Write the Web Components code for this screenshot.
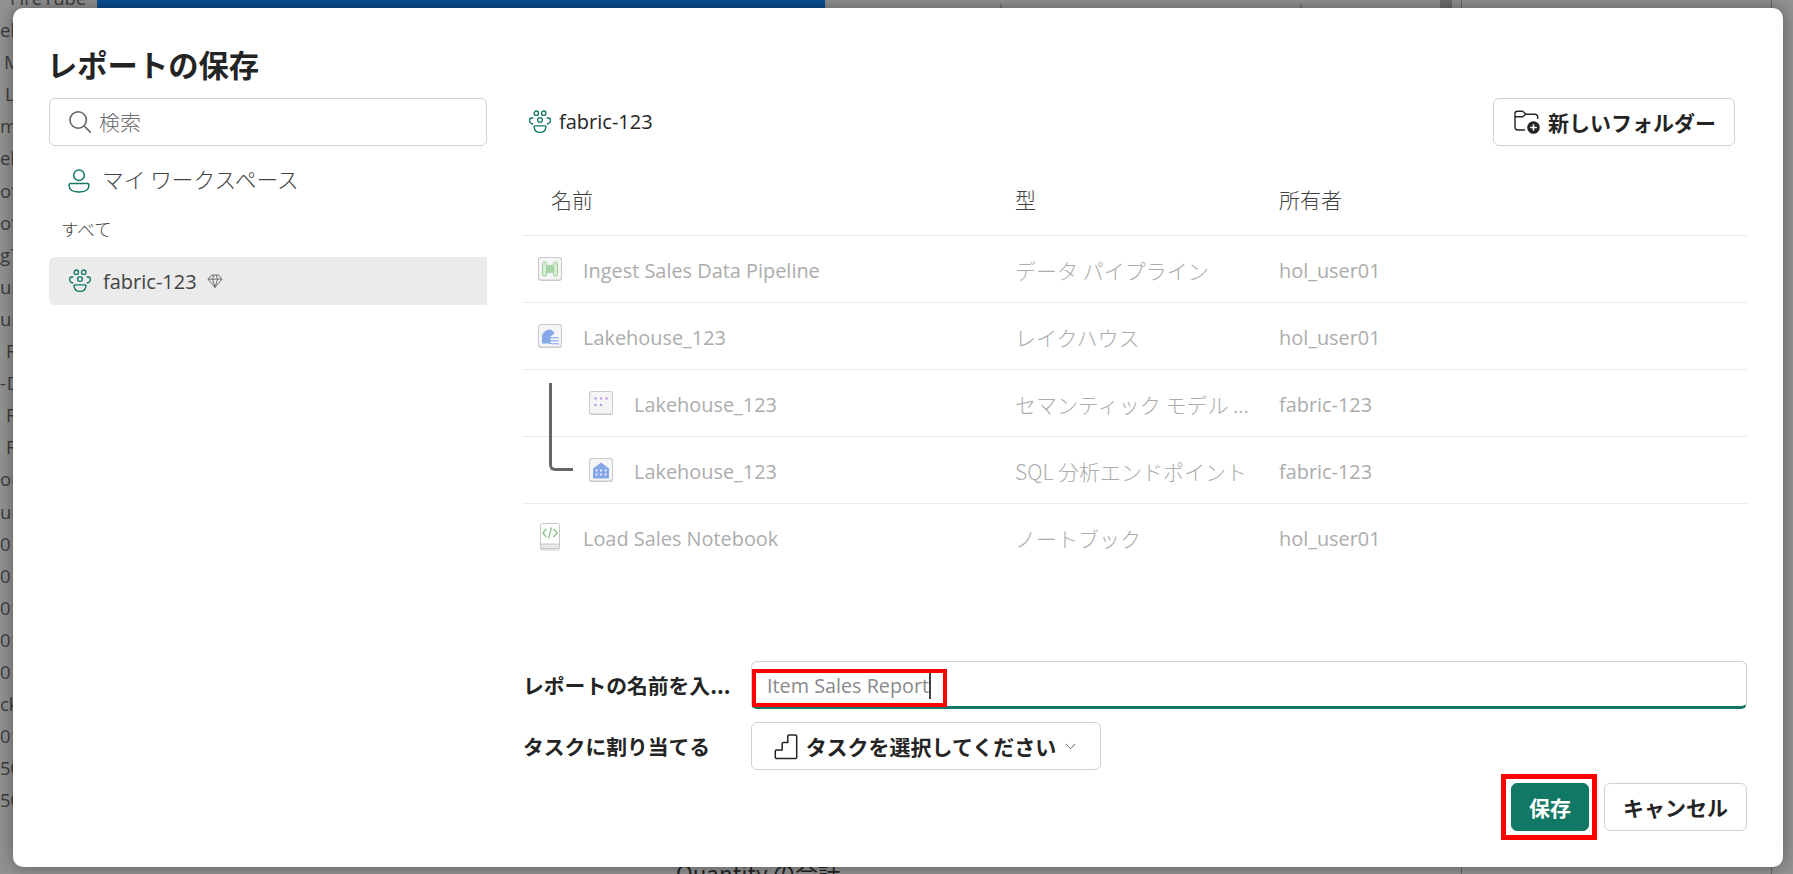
<!DOCTYPE html>
<html lang="ja"><head><meta charset="utf-8">
<style>
html,body{margin:0;padding:0;height:100%;overflow:hidden}
body{font-family:"Open Sans","Noto Sans CJK JP",sans-serif;background:#929292}
</style></head>
<body>
<backdrop-page></backdrop-page>
<save-dialog></save-dialog>
<script>
const FONT='"Open Sans","Noto Sans CJK JP",sans-serif';
const JP='"Noto Sans CJK JP","Open Sans",sans-serif';
const ICONS={
 team:(s=24)=>`<svg width="${s}" height="${s}" viewBox="0 0 24 24" fill="none" stroke="#117865" stroke-width="1.300"><circle cx="8.300" cy="3.200" r="2.200"/><circle cx="15.700" cy="3.200" r="2.200"/><circle cx="12" cy="10" r="2.400"/><path d="M5.400 8H3.800C2.500 8 1.600 8.900 1.600 10.200c0 2 1.300 3.500 3.600 3.800M18.600 8h1.600c1.300 0 2.200.9 2.200 2.200 0 2-1.300 3.500-3.600 3.800"/><path d="M6.800 15.800h10.400c.6 0 .9.400.8 1-.4 3.300-2.800 5.600-6 5.600s-5.600-2.300-6-5.600c-.1-.6.2-1 .8-1z"/></svg>`,
 person:`<svg width="24" height="24" viewBox="0 0 24 24" fill="none" stroke="#117865" stroke-width="1.500"><circle cx="12" cy="6.300" r="5.300"/><path d="M3.400 14.400h17.200c.8 0 1.300.5 1.300 1.300v1.300c0 3.600-4 6-9.900 6s-9.900-2.400-9.900-6v-1.300c0-.8.5-1.300 1.300-1.300z"/></svg>`,
 gem:`<svg width="16" height="16" viewBox="0 0 16 16" fill="none" stroke="#6f6f6f" stroke-width="1"><path d="M4.500 2h7L15 6.200 8 14.500 1 6.200z"/><path d="M1 6.200h14M5.500 6.200 8 14.500l2.500-8.300M5.500 6.200 6.800 2M10.500 6.200 9.200 2"/></svg>`,
 search:`<svg width="24" height="24" viewBox="0 0 24 24" fill="none" stroke="#616161" stroke-width="1.600"><circle cx="10.200" cy="10" r="8.200"/><path d="M16.200 16 22.800 22.600"/></svg>`,
 folder:`<svg width="26" height="24" viewBox="0 0 26 24" fill="none"><path d="M1 17V3.600C1 2.200 2 1.200 3.400 1.200h4.400c.6 0 1.100.2 1.500.6L11.800 4.300H20.800C22.500 4.300 23.700 5.500 23.700 7.200V9M1 6.800H8.600L11.800 4.300M1 17C1 18.800 2.200 20 3.900 20H11" stroke="#242424" stroke-width="1.400"/><circle cx="19.500" cy="17.500" r="6.300" fill="#242424"/><path d="M19.500 14.200v6.600M16.200 17.500h6.600" stroke="#fff" stroke-width="1.500"/></svg>`,
 stairs:`<svg width="24" height="27" viewBox="0 0 24 27" fill="none" stroke="#242424" stroke-width="1.500" stroke-linejoin="round"><path d="M15 2h6.500c.8 0 1.200.4 1.200 1.200v21c0 .8-.4 1.200-1.200 1.200H2.500c-.8 0-1.200-.4-1.200-1.200v-6c0-.8.4-1.200 1.200-1.200h5.700v-6.300c0-.8.4-1.200 1.200-1.200h4.400V3.200c0-.8.400-1.200 1.200-1.200z"/></svg>`,
 chevron:`<svg width="11" height="7" viewBox="0 0 11 7" fill="none" stroke="#616161" stroke-width="1"><path d="M.8 1 5.500 5.700 10.200 1"/></svg>`
};
const TILE={
 pipe:`<rect x="4.500" y="5" width="4" height="14" rx="1.500" fill="#d9eed7" stroke="#9fce9c"/><rect x="15.500" y="5" width="4" height="14" rx="1.500" fill="#d9eed7" stroke="#9fce9c"/><rect x="8.500" y="8" width="7" height="8" fill="#a9d4a6"/>`,
 lake:`<path d="M4 19.500V12C4 9.500 8 5.500 11.500 5.500c2 0 4 1.800 5 3.800L12.500 12.500v7z" fill="#86a8e8"/><path d="M11.500 13.800c1.700-1.600 3 1 4.700 0s3 1 4.700 0M11.500 16.800c1.700-1.600 3 1 4.700 0s3 1 4.700 0M11.500 19.800c1.700-1.600 3 1 4.700 0s3 1 4.700 0" fill="none" stroke="#86a8e8" stroke-width="1.100"/>`,
 model:`<g fill="#b79ade"><circle cx="6.500" cy="7.500" r="1.200"/><circle cx="12" cy="7.500" r="1.200"/><circle cx="17.500" cy="7.500" r="1.200"/></g><g fill="#a59ee0"><circle cx="6.500" cy="14" r="1.200"/><circle cx="12" cy="14" r="1.200"/></g>`,
 sql:`<path d="M4 10.500 12 4.500l8 6V19.500c0 .6-.4 1-1 1H5c-.6 0-1-.4-1-1z" fill="#86a8e8"/><g fill="#fff"><circle cx="7.500" cy="12.500" r="1"/><circle cx="12" cy="12.500" r="1"/><circle cx="16.500" cy="12.500" r="1"/><circle cx="7.500" cy="16.500" r="1"/><circle cx="12" cy="16.500" r="1"/><circle cx="16.500" cy="16.500" r="1"/></g>`,
 note:`<path d="M8.500 6 4.800 10l3.700 4M15.500 6l3.700 4-3.700 4M13.500 4.500l-3 11" fill="none" stroke="#86c286" stroke-width="1.300"/>`
};

class BackdropPage extends HTMLElement{
 constructor(){super();const r=this.attachShadow({mode:'open'});
 const rows=[[10,'Fire Tube'],[0,'elm'],[4,'M'],[5,'L'],[0,'m'],[0,'elm'],[0,'ot'],[0,'ot'],[0,'g T'],[0,'ur'],[0,'ur'],[6,'R'],[0,'- D'],[6,'R'],[6,'R'],[0,'ou'],[0,'ur'],[0,'0 H'],[0,'0 H'],[0,'0 S'],[0,'0 S'],[0,'0 H'],[0,'ck'],[0,'0 S'],[0,'50'],[0,'50']];
 r.innerHTML=`<style>
 :host{display:grid;grid-template-columns:97px 728px 1fr;grid-template-rows:8px 1fr;position:fixed;inset:0;background:#929292;overflow:hidden;font:18.500px ${FONT};color:#3a3a3a}
 .list{grid-row:1/3;grid-column:1;display:flex;flex-direction:column;margin-top:-18px;white-space:nowrap;color:#3c3c3c;word-spacing:-4px}
 .list div{height:32.100px;line-height:32.100px;flex:none}
 .blue{grid-row:1;grid-column:2;background:#0a4f90}
 .foot{position:absolute;left:676px;top:857px;font:22.500px/30px ${JP};color:#222;white-space:nowrap}
 .rule{position:absolute;top:0;bottom:0;width:1px;background:#666}
 .tick{position:absolute;top:4px;height:4px;width:2px;background:#777}
 .block{position:absolute;left:1440px;top:0;width:12px;height:8px;background:#6e6e6e}
 </style>
 <div class="list">${rows.map(([p,t])=>`<div style="padding-left:${p}px">${t}</div>`).join('')}</div>
 <div class="blue"></div>
 <div class="tick" style="left:1000px"></div><div class="tick" style="left:1300px"></div>
 <div class="block"></div>
 <div class="rule" style="left:1461px"></div><div class="rule" style="left:1771px"></div>
 <div class="foot">Quantity の合計</div>`;
 }
}
customElements.define('backdrop-page',BackdropPage);

class FileTile extends HTMLElement{
 constructor(){super();this.attachShadow({mode:'open'})}
 connectedCallback(){const k=this.getAttribute('kind');
 const note=k==='note';
 this.shadowRoot.innerHTML=`<style>
 :host{display:block;width:24px;height:${note?'28px':'24px'};flex:none}
 svg{display:block}
 </style>${note?
 `<svg width="24" height="28" viewBox="0 0 24 28"><rect x="2.500" y=".500" width="19" height="26.500" rx="2" fill="#fff" stroke="#c8c8c8"/><path d="M2.500 21h19v4.500H2.500z" fill="#e8e8e8" stroke="#c8c8c8"/>${TILE.note}</svg>`:
 `<svg width="24" height="24" viewBox="0 0 24 24"><rect width="24" height="24" rx="3" fill="#c9c9c9"/><rect x="1" y="1" width="22" height="21.500" rx="2.200" fill="#f5f5f6"/>${TILE[k]}</svg>`}`;
 }
}
customElements.define('file-tile',FileTile);

class FileRow extends HTMLElement{
 constructor(){super();this.attachShadow({mode:'open'})}
 connectedCallback(){const g=a=>this.getAttribute(a)||'';const child=this.hasAttribute('child');
 this.shadowRoot.innerHTML=`<style>
 :host{display:grid;grid-template-columns:492px 264px 1fr;height:66px;border-bottom:1px solid #ebebeb;align-items:center;font:19.900px/26px ${FONT};color:#acacac;position:relative}
 :host(:last-of-type){border-bottom:0}
 .name{display:flex;align-items:center;gap:21px;padding-left:${child?'66px':'15px'}}
 .type{font:300 21px/26px ${JP};white-space:nowrap;padding-top:1px}
 .t{padding-top:3px}
 </style>
 <div class="name"><file-tile kind="${g('kind')}"></file-tile><span class="t">${g('name')}</span></div>
 <div class="type">${g('type')}</div><div class="t">${g('owner')}</div>`;
 }
}
customElements.define('file-row',FileRow);

class OutlineBtn extends HTMLElement{
 constructor(){super();const r=this.attachShadow({mode:'open'});
 r.innerHTML=`<style>
 :host{display:inline-flex;align-items:center;justify-content:center;height:48px;box-sizing:border-box;border:1px solid #d1d1d1;border-radius:6px;background:#fff;font:600 21px/26px ${JP};color:#242424;white-space:nowrap}
 :host([primary]){background:#117865;border-color:#117865;color:#fff}
 </style><slot></slot>`}
}
customElements.define('outline-btn',OutlineBtn);

class SaveDialog extends HTMLElement{
 constructor(){super();const r=this.attachShadow({mode:'open'});
 r.innerHTML=`<style>
 :host{position:fixed;left:13px;top:8px;width:1770px;height:859px;box-sizing:border-box;background:#fff;border-radius:10px;box-shadow:0 0 16px rgba(0,0,0,.38);font:20px/26px ${FONT};color:#242424;display:flex;flex-direction:column;padding:0 36px}
 h1{margin:0 0 0 -2px;font:700 30.300px/40px ${JP};height:90px;box-sizing:border-box;padding-top:36px;color:#242424;flex:none}
 .body{display:grid;grid-template-columns:438px 1fr;gap:0 36px;flex:1;min-height:0}
 .side{display:flex;flex-direction:column}
 .search{height:48px;box-sizing:border-box;border:1px solid #d1d1d1;border-radius:6px;display:flex;align-items:center;padding-left:18px;gap:7px;font:300 21px/26px ${JP};color:#707070}
 .search span{margin-top:-2px}
 .me{height:71px;display:flex;align-items:center;gap:11px;padding:0 0 2px 18px;font:300 21.700px/26px ${JP};color:#424242;box-sizing:border-box}
 .me span{margin-top:-4px}
 .all{height:40px;font:300 17.500px/24px ${JP};color:#424242;padding:0 0 0 12px;box-sizing:border-box}
 .ws{height:48px;background:#ebebeb;border-radius:6px 0 0 6px;display:flex;align-items:center;padding-left:19px;gap:11px;color:#424242}
 .ws span{margin-top:2px}
 .ws svg:last-child{margin-left:-1px}
 .main{display:flex;flex-direction:column}
 .top{display:flex;align-items:center;justify-content:space-between;height:48px;padding-right:12px}
 .crumb{display:flex;align-items:center;gap:7px;padding-left:5px}
 .folder{width:242px;gap:8px;padding-left:2px}
 .head{display:grid;grid-template-columns:492px 264px 1fr;height:90px;align-items:center;border-bottom:1px solid #ebebeb;font:300 21px/26px ${JP};color:#424242;box-sizing:border-box;padding-top:17px}
 .head span:first-child{padding-left:28px}
 .rows{position:relative;flex:none}
 .conn{position:absolute;left:26px;top:147px;width:24px;height:88px;border:solid #666;border-width:0 0 3px 3px;border-bottom-left-radius:6px;box-sizing:border-box}
 .form{margin-top:auto;display:grid;grid-template-columns:228px 1fr;row-gap:13px;align-items:center;font:600 20.800px/26px ${JP};color:#242424}
 .name-input{height:48px;box-sizing:border-box;border:1px solid #d1d1d1;border-bottom:3px solid #117865;border-radius:6px;display:flex;align-items:center;position:relative;font:19.800px/26px ${FONT};color:#8a8a8a;padding-left:15px}
 .name-input span{margin-top:4px}
 .mark{position:absolute;left:0;top:7px;width:195px;height:38px;box-sizing:border-box;border:4px solid #f00}
 .caret{width:1.500px;height:26px;background:#424242;margin-bottom:-4px}
 .task{justify-self:start;width:350px;gap:8px;height:48px;padding-right:2px}
 .chev{display:flex;margin-left:1px}
 .foot{display:flex;justify-content:flex-end;gap:15px;padding:13px 0 36px;flex:none}
 .save{width:78px}
 .save-wrap{position:relative;display:flex}
 .ring{position:absolute;left:-10px;top:-9px;width:96px;height:66px;box-sizing:border-box;border:5px solid #f00}
 .cancel{width:143px}
 </style>
 <h1>レポートの保存</h1>
 <div class="body">
  <div class="side">
   <div class="search">${ICONS.search}<span>検索</span></div>
   <div class="me">${ICONS.person}<span>マイ ワークスペース</span></div>
   <div class="all">すべて</div>
   <div class="ws">${ICONS.team()}<span>fabric-123</span>${ICONS.gem}</div>
  </div>
  <div class="main">
   <div class="top"><div class="crumb">${ICONS.team()}<span>fabric-123</span></div>
    <outline-btn class="folder">${ICONS.folder}<span>新しいフォルダー</span></outline-btn></div>
   <div class="head"><span>名前</span><span>型</span><span>所有者</span></div>
   <div class="rows">
    <file-row kind="pipe" name="Ingest Sales Data Pipeline" type="データ パイプライン" owner="hol_user01"></file-row>
    <file-row kind="lake" name="Lakehouse_123" type="レイクハウス" owner="hol_user01"></file-row>
    <file-row child kind="model" name="Lakehouse_123" type="セマンティック モデル ..." owner="fabric-123"></file-row>
    <file-row child kind="sql" name="Lakehouse_123" type="SQL 分析エンドポイント" owner="fabric-123"></file-row>
    <file-row kind="note" name="Load Sales Notebook" type="ノートブック" owner="hol_user01"></file-row>
    <div class="conn"></div>
   </div>
   <div class="form">
    <div>レポートの名前を入...</div>
    <div class="name-input"><span>Item Sales Report</span><i class="caret"></i><div class="mark"></div></div>
    <div>タスクに割り当てる</div>
    <outline-btn class="task">${ICONS.stairs}<span>タスクを選択してください</span><span class="chev">${ICONS.chevron}</span></outline-btn>
   </div>
   <div class="foot">
    <div class="save-wrap"><outline-btn primary class="save">保存</outline-btn><div class="ring"></div></div>
    <outline-btn class="cancel">キャンセル</outline-btn>
   </div>
  </div>
 </div>`}
}
customElements.define('save-dialog',SaveDialog);
</script>
</body></html>
